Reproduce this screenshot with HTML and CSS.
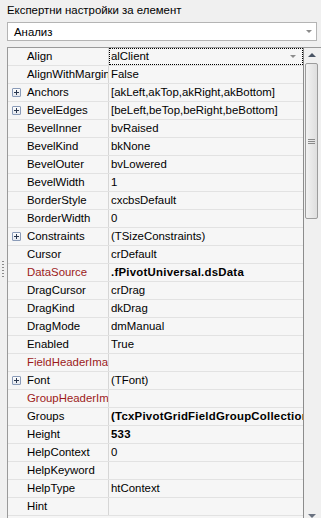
FILE: index.html
```html
<!DOCTYPE html>
<html lang="bg">
<head>
    <meta charset="UTF-8">
    <meta name="viewport" content="width=device-width, initial-scale=1.0">
    <title>Инспектор на обекти</title>
    <link rel="stylesheet" href="styles.css">
</head>
<body>
    <div class="panel">
        <div class="splitter"><span class="grip"></span></div>

        <div class="main">
            <div class="title">Експертни настройки за елемент</div>

            <div class="combo">
                <span>Анализ</span>
                <span class="arrow"></span>
            </div>

            <div class="grid">
                <div class="rows">
                    <div class="row">
                        <div class="name">Align</div>
                        <div class="value focused">alClient<span class="arrow"></span></div>
                    </div>
                    <div class="row">
                        <div class="name">AlignWithMargins</div>
                        <div class="value">False</div>
                    </div>
                    <div class="row">
                        <div class="name"><span class="plus"></span>Anchors</div>
                        <div class="value">[akLeft,akTop,akRight,akBottom]</div>
                    </div>
                    <div class="row">
                        <div class="name"><span class="plus"></span>BevelEdges</div>
                        <div class="value">[beLeft,beTop,beRight,beBottom]</div>
                    </div>
                    <div class="row">
                        <div class="name">BevelInner</div>
                        <div class="value">bvRaised</div>
                    </div>
                    <div class="row">
                        <div class="name">BevelKind</div>
                        <div class="value">bkNone</div>
                    </div>
                    <div class="row">
                        <div class="name">BevelOuter</div>
                        <div class="value">bvLowered</div>
                    </div>
                    <div class="row">
                        <div class="name">BevelWidth</div>
                        <div class="value">1</div>
                    </div>
                    <div class="row">
                        <div class="name">BorderStyle</div>
                        <div class="value">cxcbsDefault</div>
                    </div>
                    <div class="row">
                        <div class="name">BorderWidth</div>
                        <div class="value">0</div>
                    </div>
                    <div class="row">
                        <div class="name"><span class="plus"></span>Constraints</div>
                        <div class="value">(TSizeConstraints)</div>
                    </div>
                    <div class="row">
                        <div class="name">Cursor</div>
                        <div class="value">crDefault</div>
                    </div>
                    <div class="row">
                        <div class="name link">DataSource</div>
                        <div class="value bold">.fPivotUniversal.dsData</div>
                    </div>
                    <div class="row">
                        <div class="name">DragCursor</div>
                        <div class="value">crDrag</div>
                    </div>
                    <div class="row">
                        <div class="name">DragKind</div>
                        <div class="value">dkDrag</div>
                    </div>
                    <div class="row">
                        <div class="name">DragMode</div>
                        <div class="value">dmManual</div>
                    </div>
                    <div class="row">
                        <div class="name">Enabled</div>
                        <div class="value">True</div>
                    </div>
                    <div class="row">
                        <div class="name link">FieldHeaderImages</div>
                        <div class="value"></div>
                    </div>
                    <div class="row">
                        <div class="name"><span class="plus"></span>Font</div>
                        <div class="value">(TFont)</div>
                    </div>
                    <div class="row">
                        <div class="name link">GroupHeaderImages</div>
                        <div class="value"></div>
                    </div>
                    <div class="row">
                        <div class="name">Groups</div>
                        <div class="value bold">(TcxPivotGridFieldGroupCollection)</div>
                    </div>
                    <div class="row">
                        <div class="name">Height</div>
                        <div class="value bold">533</div>
                    </div>
                    <div class="row">
                        <div class="name">HelpContext</div>
                        <div class="value">0</div>
                    </div>
                    <div class="row">
                        <div class="name">HelpKeyword</div>
                        <div class="value"></div>
                    </div>
                    <div class="row">
                        <div class="name">HelpType</div>
                        <div class="value">htContext</div>
                    </div>
                    <div class="row">
                        <div class="name">Hint</div>
                        <div class="value"></div>
                    </div>
                </div>

                <div class="vscroll">
                    <div class="btn up"></div>
                    <div class="track">
                        <div class="thumb"><span class="lines"></span></div>
                    </div>
                    <div class="btn down"></div>
                </div>
            </div>
        </div>
    </div>
</body>
</html>
```

FILE: styles.css
```css
html, body {
    margin: 0;
    padding: 0;
    width: 321px;
    height: 518px;
    overflow: hidden;
    background-color: #f0f0f0;
    font-family: "Liberation Sans", Arial, sans-serif;
    font-size: 11.4px;
    color: #000;
}

.panel {
    display: flex;
    height: 518px;
    overflow: hidden;
}

.splitter {
    width: 7px;
    flex-shrink: 0;
    padding-top: 261px;
    box-sizing: border-box;
}

.grip {
    display: block;
    margin-left: 2px;
    width: 2px;
    height: 17px;
    background: repeating-linear-gradient(to bottom, #8a8a8a 0 1px, transparent 1px 3px);
}

.main {
    width: 314px;
    display: flex;
    flex-direction: column;
}

.main > * {
    flex-shrink: 0;
}

.title {
    height: 22px;
    line-height: 20px;
    white-space: nowrap;
}

.combo {
    width: 310px;
    height: 19px;
    box-sizing: border-box;
    border: 1px solid #b4b4b4;
    background-color: #fff;
    display: flex;
    align-items: center;
    justify-content: space-between;
    padding: 0 4px 0 6px;
}

.arrow {
    width: 0;
    height: 0;
    border-left: 3px solid transparent;
    border-right: 3px solid transparent;
    border-top: 3px solid #8c8c8c;
}

.grid {
    margin-top: 6px;
    display: flex;
    border-top: 1px solid #9a9a9a;
    border-left: 1px solid #9a9a9a;
}

.rows {
    width: 295px;
    padding-bottom: 6px;
    border-right: 1px solid #8c8c8c;
    background-color: #f6f6f6;
}

.row {
    display: flex;
    height: 18px;
    box-sizing: border-box;
    border-bottom: 1px solid #e2e2e2;
    line-height: 17px;
}

.name {
    width: 101px;
    flex-shrink: 0;
    border-right: 1px solid #d6d6d6;
    padding-left: 19px;
    box-sizing: border-box;
    white-space: nowrap;
    overflow: hidden;
    position: relative;
}

.name.link {
    color: #9c1a1a;
}

.plus {
    position: absolute;
    left: 4px;
    top: 4px;
    width: 7px;
    height: 7px;
    border: 1px solid #8a9bb8;
    border-radius: 1px;
    background: linear-gradient(#fdfdfd, #e4e8ee);
}

.plus::before,
.plus::after {
    content: "";
    position: absolute;
    background-color: #2a3850;
}

.plus::before {
    left: 1px;
    top: 3px;
    width: 5px;
    height: 1px;
}

.plus::after {
    left: 3px;
    top: 1px;
    width: 1px;
    height: 5px;
}

.value {
    flex: 1;
    padding-left: 2px;
    white-space: nowrap;
    overflow: hidden;
}

.value.bold {
    font-weight: bold;
    letter-spacing: 0.25px;
}

.value.focused {
    outline: 1px dotted #000;
    outline-offset: -1px;
    display: flex;
    align-items: center;
    justify-content: space-between;
    padding-right: 7px;
}

.vscroll {
    width: 15px;
    display: flex;
    flex-direction: column;
    background-color: #f0f0f0;
}

.btn {
    height: 13px;
    display: flex;
    align-items: center;
    justify-content: center;
}

.btn.up::before {
    content: "";
    border-left: 4px solid transparent;
    border-right: 4px solid transparent;
    border-bottom: 4px solid #4a5565;
}

.btn.down::before {
    content: "";
    border-left: 4px solid transparent;
    border-right: 4px solid transparent;
    border-top: 4px solid #6a7280;
}

.track {
    flex: 1;
    padding: 2px 1px 0;
}

.thumb {
    height: 154px;
    border: 1px solid #9c9c9c;
    border-radius: 2px;
    background: linear-gradient(to right, #f2f2f2, #dedede);
    display: flex;
    align-items: center;
    justify-content: center;
}

.lines {
    width: 7px;
    height: 5px;
    background: repeating-linear-gradient(to bottom, #8a8a8a 0 1px, transparent 1px 2px);
}
```
